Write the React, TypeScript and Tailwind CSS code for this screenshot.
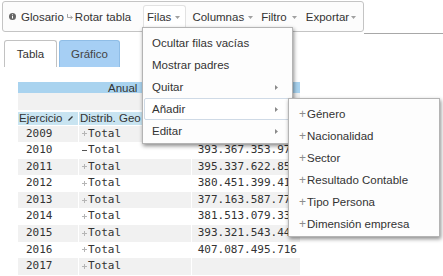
import React from "react";

const Caret = ({ ml = 3 }: { ml?: number }) => (
  <svg width="5" height="3" viewBox="0 0 5 3" style={{ marginLeft: ml }} className="mt-[1px] shrink-0">
    <path d="M0 0H5L2.5 3Z" fill="#a0a0a0" />
  </svg>
);

const RightArrow = () => (
  <svg width="3" height="5" viewBox="0 0 3 5" className="ml-auto mr-[5px] shrink-0">
    <path d="M0 0L3 2.5L0 5Z" fill="#8a8a8a" />
  </svg>
);

const TinyPlus = ({ minus }: { minus?: boolean }) => (
  <svg width="5" height="5" viewBox="0 0 5 5" className="shrink-0 mr-[1px]">
    <path d="M0 2.5H5" stroke={minus ? "#555" : "#b5b5b5"} strokeWidth="1" />
    {!minus && <path d="M2.5 0V5" stroke="#b5b5b5" strokeWidth="1" />}
  </svg>
);

const rows: [string, string, boolean?][] = [
  ["2009", "392.614.207.338"],
  ["2010", "393.367.353.975", true],
  ["2011", "395.337.622.853"],
  ["2012", "380.451.399.414"],
  ["2013", "377.163.587.772"],
  ["2014", "381.513.079.331"],
  ["2015", "393.321.543.446"],
  ["2016", "407.087.495.716"],
  ["2017", ""],
];

export default function App() {
  return (
    <div className="relative w-[443px] h-[276px] overflow-hidden bg-white text-[#333] font-['Liberation_Sans',Arial,sans-serif] text-[11.5px] leading-[14px]">
      {/* toolbar row */}
      <div className="flex h-[34px] items-start pl-[2px]">
        <div className="mt-[1px] h-[31px] w-[362px] shrink-0 border border-[#c4c4c4] rounded-[3px] bg-[#fcfcfc] flex items-center pl-[6px]">
          <svg width="7" height="7" viewBox="0 0 7 7" className="shrink-0">
            <circle cx="3.5" cy="3.5" r="3.5" fill="#666" />
            <rect x="3" y="3" width="1" height="2.5" fill="#fff" />
            <rect x="3" y="1.3" width="1" height="1" fill="#fff" />
          </svg>
          <span className="ml-[5px]">Glosario</span>
          <svg width="6" height="6" viewBox="0 0 6 6" className="ml-[3px] mt-[1px] shrink-0">
            <path d="M0.5 0V3.5H5" stroke="#999" strokeWidth="0.9" fill="none" />
            <path d="M3.5 2L5.5 3.5L3.5 5" stroke="#999" strokeWidth="0.9" fill="none" />
          </svg>
          <span className="ml-[2px]">Rotar tabla</span>
          <div className="ml-[12px] self-end h-[26px] flex items-start pt-[4px] pl-[3px] pr-[5px] bg-white border border-b-0 border-[#e2e2e2] rounded-t-[3px]">
            <span>Filas</span>
            <span className="h-[14px] flex items-center">
              <Caret ml={4} />
            </span>
          </div>
          <span className="ml-[6px]">Columnas</span>
          <Caret ml={4} />
          <span className="ml-[8px]">Filtro</span>
          <Caret ml={5} />
          <span className="ml-[9px]">Exportar</span>
          <Caret ml={2} />
        </div>
        <div className="flex-1 h-[34px] border-b border-[#a8a8a8]" />
      </div>

      {/* tabs */}
      <div className="flex mt-[6px] pl-[4px] gap-[2px]">
        <div className="w-[53px] h-[27px] border border-b-0 border-[#c2c2c2] rounded-t-[3px] bg-white flex items-center justify-center">
          Tabla
        </div>
        <div className="w-[61px] h-[27px] border border-b-0 border-[#8fbde6] rounded-t-[3px] bg-[#a6cff4] flex items-center justify-center text-[#444]">
          Gráfico
        </div>
      </div>

      {/* table */}
      <div className="mt-[15px] ml-[18px] w-[282px]">
        <div className="h-[11px] bg-[#a9d3ef] pl-[90px] leading-[12px] flex">
          <span className="whitespace-nowrap">Anual</span>
        </div>
        <div className="h-[17px] bg-[#f1f1f1]" />
        <div className="mt-[2px] h-[13px] grid grid-cols-[60px_112px_108px] gap-x-px leading-[13px]">
          <div className="bg-[#c8e4f1] pl-[1px] flex items-center">
            <span>Ejercicio</span>
            <svg width="5" height="5" viewBox="0 0 5 5" className="ml-[6px]">
              <path d="M0.5 4.5L4.5 0.5" stroke="#333" strokeWidth="1.2" />
            </svg>
          </div>
          <div className="bg-[#c8e4f1] pl-[1px] whitespace-nowrap">Distrib. Geo</div>
          <div className="bg-white" />
        </div>
        <div className="mt-[0.5px] font-['DejaVu_Sans_Mono',monospace] text-[11px] text-[#333]">
          {rows.map(([y, v, minus], i) => {
            const bg = i % 2 === 0 ? "bg-[#f1f1f1]" : "bg-white";
            return (
              <div key={y} className="h-[16.6px] grid grid-cols-[60px_112px_108px] gap-x-px leading-[16.6px]">
                <div className={`${bg} pl-[8px]`}>{y}</div>
                <div className={`${bg} pl-[3px] flex items-center`}>
                  <TinyPlus minus={minus} />
                  <span>Total</span>
                </div>
                <div className={`${bg} pr-[3px] text-right whitespace-nowrap`}>{v}</div>
              </div>
            );
          })}
        </div>
      </div>

      {/* Filas menu */}
      <div className="absolute left-[142px] top-[27px] w-[151px] bg-[#fdfdfd] border border-[#b4b4b4] pt-[4px] pb-[1px] shadow-[1px_2px_4px_rgba(0,0,0,0.45)]">
        {[
          ["Ocultar filas vacías", false, false],
          ["Mostrar padres", false, false],
          ["Quitar", true, false],
          ["Añadir", true, true],
          ["Editar", true, false],
        ].map(([label, arrow, active]) => (
          <div
            key={label as string}
            className={`h-[22px] mx-[1px] px-[7px] flex items-center whitespace-nowrap rounded-[2px] border ${
              active ? "border-[#cfdae6] bg-white" : "border-transparent"
            }`}
          >
            <span>{label as string}</span>
            {arrow && <RightArrow />}
          </div>
        ))}
      </div>

      {/* Añadir submenu */}
      <div className="absolute left-[288px] top-[98px] w-[152px] bg-[#fdfdfd] border border-[#b4b4b4] pt-[4px] pb-[1px] shadow-[1px_2px_4px_rgba(0,0,0,0.45)]">
        {["Género", "Nacionalidad", "Sector", "Resultado Contable", "Tipo Persona", "Dimensión empresa"].map((s) => (
          <div key={s} className="h-[22px] px-[10px] flex items-center whitespace-nowrap">
            <span className="text-[#8c8c8c] text-[12px]">+</span>
            <span className="ml-[1px]">{s}</span>
          </div>
        ))}
      </div>
    </div>
  );
}
